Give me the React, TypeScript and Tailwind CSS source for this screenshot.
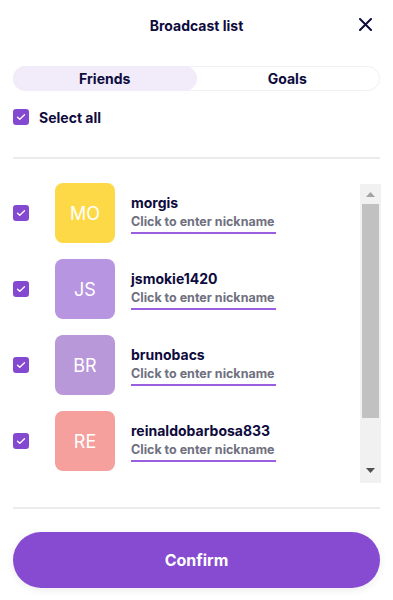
import React from "react";

const users = [
  { initials: "MO", name: "morgis", color: "bg-[#fed947]" },
  { initials: "JS", name: "jsmokie1420", color: "bg-[#b795e0]" },
  { initials: "BR", name: "brunobacs", color: "bg-[#b898d9]" },
  { initials: "RE", name: "reinaldobarbosa833", color: "bg-[#f5a09d]" },
];

function Check() {
  return (
    <div className="w-4 h-4 rounded-[3px] bg-[#8549d1] flex items-center justify-center shrink-0">
      <svg width="10" height="8" viewBox="0 0 10 8" fill="none">
        <path d="M1.5 4.2 L3.8 6.3 L8.5 1.7" stroke="white" strokeWidth="1.3" strokeLinecap="round" strokeLinejoin="round" />
      </svg>
    </div>
  );
}

export default function App() {
  return (
    <div
      className="w-[393px] h-[600px] bg-white flex flex-col text-[#0e0b3d]"
      style={{ fontFamily: "Inter, 'Noto Sans', sans-serif" }}
    >
      <div className="h-[50px] relative flex items-center justify-center">
        <span className="text-[14px] font-bold">Broadcast list</span>
        <svg className="absolute left-[359px] top-[18px]" width="13" height="13" viewBox="0 0 13 13" fill="none">
          <path d="M1 1 L12 12 M12 1 L1 12" stroke="#0e0b3d" strokeWidth="2" strokeLinecap="round" />
        </svg>
      </div>

      <div className="mt-[16px] mx-[13px] h-[25px] rounded-full border border-[#f1f0f4] flex text-[14px] font-bold">
        <div className="flex-1 rounded-full bg-[#f1ebfa] flex items-center justify-center -m-px">Friends</div>
        <div className="flex-1 flex items-center justify-center">Goals</div>
      </div>

      <div className="mt-[18px] mx-[13px] h-4 flex items-center gap-[10px]">
        <Check />
        <span className="text-[14px] font-bold">Select all</span>
      </div>

      <div className="mt-[32px] mx-[13px] h-[2px] bg-[#ebebeb]" />

      <div className="mt-[24px] ml-[13px] mr-[12px] h-[300px] flex">
        <div className="flex-1 overflow-hidden flex flex-col gap-4">
          {users.map((u) => (
            <div key={u.name} className="flex items-center shrink-0">
              <Check />
              <div className={`ml-[26px] w-[60px] h-[60px] rounded-[8px] ${u.color} flex items-center justify-center text-white text-[18px]`}>
                {u.initials}
              </div>
              <div className="ml-4 flex flex-col">
                <span className="text-[14px] leading-5 font-bold">{u.name}</span>
                <span className="w-[145px] text-[12.5px] leading-[17px] font-bold text-[#707080] pb-[2px] border-b-2 border-[#9a5fe0]">
                  Click to enter nickname
                </span>
              </div>
            </div>
          ))}
        </div>
        <div className="w-[21px] mt-px bg-[#f1f1f1] flex flex-col items-center">
          <div className="h-[20px] flex items-center justify-center">
            <svg width="9" height="5" viewBox="0 0 9 5"><path d="M4.5 0 L9 5 L0 5 Z" fill="#a3a3a3" /></svg>
          </div>
          <div className="w-[17px] h-[214px] bg-[#c1c1c1]" />
          <div className="flex-1" />
          <div className="h-[20px] flex items-center justify-center mb-[3px]">
            <svg width="9" height="5" viewBox="0 0 9 5"><path d="M0 0 L9 0 L4.5 5 Z" fill="#505050" /></svg>
          </div>
        </div>
      </div>

      <div className="mt-[24px] mx-[13px] h-[2px] bg-[#ebebeb]" />

      <button className="mt-[23px] mx-[13px] h-[56px] rounded-full bg-[#874bd2] text-white text-[16px] font-bold shadow-[0_2px_8px_rgba(0,0,0,0.08)]">
        Confirm
      </button>
    </div>
  );
}
